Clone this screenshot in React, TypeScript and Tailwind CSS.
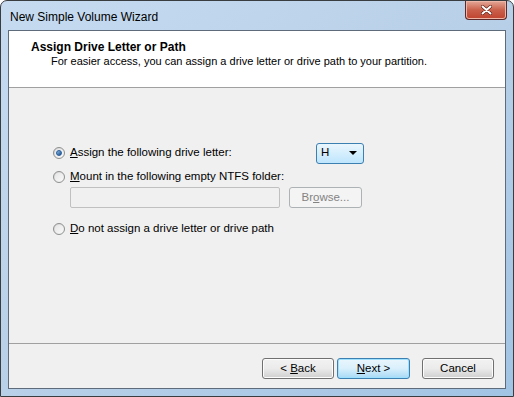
import React from 'react';

const font = { fontFamily: '"Liberation Sans", Arial, sans-serif' };

const Radio = ({ checked }: { checked?: boolean }) => (
  <span className="relative inline-flex h-[12px] w-[12px] shrink-0 items-center justify-center rounded-full border border-[#8e8f8f] bg-gradient-to-br from-[#d4d4d4] to-[#fbfbfb]">
    <span className="h-[8px] w-[8px] rounded-full bg-gradient-to-br from-[#e6e6e6] to-[#f8f8f8] flex items-center justify-center">
      {checked && <span className="h-[6px] w-[6px] rounded-full bg-gradient-to-br from-[#8fbee9] to-[#1a4f86] border border-[#235a9b]" />}
    </span>
  </span>
);

const Button = ({ children, primary, disabled }: { children: React.ReactNode; primary?: boolean; disabled?: boolean }) => (
  <div
    className={
      'flex h-[21px] items-center justify-center rounded-[3px] border text-[11.5px] ' +
      (primary
        ? 'w-[73px] border-[#3c7fb1] bg-gradient-to-b from-[#eaf6fd] via-[#d9f0fc] to-[#a7d9f5] shadow-[inset_0_0_0_1px_#9ee1ff] text-black'
        : disabled
        ? 'w-[73px] border-[#adb2b5] bg-[#f4f4f4] text-[#838383]'
        : 'w-[72px] border-[#707070] bg-gradient-to-b from-[#f2f2f2] via-[#ebebeb] to-[#cfcfcf] shadow-[inset_0_0_0_1px_#fcfcfc] text-black')
    }
  >
    <span className="whitespace-pre">{children}</span>
  </div>
);

export default function App() {
  return (
    <div
      style={font}
      className="flex h-[397px] w-[514px] flex-col overflow-hidden rounded-t-[7px] border border-[#3a3d40] bg-gradient-to-br from-[#c6dbf0] via-[#b8d0e8] to-[#a2c4e4]"
    >
      <div className="flex h-[29px] items-start justify-between">
        <span className="pl-[9px] pt-[7px] text-[12px] text-black">New Simple Volume Wizard</span>
        <div className="mr-[6px] flex h-[19px] w-[42px] items-center justify-center rounded-b-[4px] border border-t-0 border-[#5c2a2a] bg-gradient-to-b from-[#e4a898] via-[#c9604b] to-[#bf432e] shadow-[inset_0_0_0_1px_#eeb6a6]">
          <svg width="11" height="10" viewBox="0 0 11 10">
            <path d="M1.5 1.5 L9.5 8.5 M9.5 1.5 L1.5 8.5" stroke="#5a1b10" strokeWidth="3.2" strokeLinecap="round" />
            <path d="M1.5 1.5 L9.5 8.5 M9.5 1.5 L1.5 8.5" stroke="#ffffff" strokeWidth="2" strokeLinecap="round" />
          </svg>
        </div>
      </div>
      <div className="mx-[7px] mb-[7px] flex flex-1 flex-col border border-[#5d6b7a] bg-[#f0f0f0]">
        <div className="h-[57px] border-b border-[#a0a0a0] bg-white pl-[22px] pt-[9px] leading-[14px]">
          <div className="text-[12px] font-bold text-black">Assign Drive Letter or Path</div>
          <div className="pl-[20px] text-[11px] text-black">
            For easier access, you can assign a drive letter or drive path to your partition.
          </div>
        </div>
        <div className="flex flex-1 flex-col pl-[44px] pt-[54px] text-[11.5px] text-black">
          <div className="flex h-[22px] items-center">
            <Radio checked />
            <span className="ml-[5px] w-[246px]"><u>A</u>ssign the following drive letter:</span>
            <div className="flex h-[21px] w-[48px] items-center justify-between rounded-[3px] border border-[#3c7fb1] bg-gradient-to-b from-[#eaf6fd] to-[#bee6fd] pl-[4px] pr-[6px]">
              <span>H</span>
              <svg width="8" height="4" viewBox="0 0 8 4"><path d="M0 0 L8 0 L4 4 Z" fill="#000" /></svg>
            </div>
          </div>
          <div className="mt-[4px] flex h-[18px] items-center">
            <Radio />
            <span className="ml-[5px]"><u>M</u>ount in the following empty NTFS folder:</span>
          </div>
          <div className="ml-[17px] mt-[1px] flex items-center gap-[9px]">
            <div className="h-[21px] w-[210px] rounded-[2px] border border-[#c0c0c0] bg-[#f0f0f0]" />
            <Button disabled>Br<u>o</u>wse...</Button>
          </div>
          <div className="mt-[12px] flex h-[18px] items-center">
            <Radio />
            <span className="ml-[5px]"><u>D</u>o not assign a drive letter or drive path</span>
          </div>
        </div>
        <div className="h-[0px] border-t border-[#a0a0a0]" />
        <div className="flex h-[44px] items-start justify-end pr-[11px] pt-[14px]">
          <Button>&lt; <u>B</u>ack</Button>
          <div className="ml-[3px]">
            <Button primary><u>N</u>ext &gt;</Button>
          </div>
          <div className="ml-[12px]">
            <Button>Cancel</Button>
          </div>
        </div>
      </div>
    </div>
  );
}
